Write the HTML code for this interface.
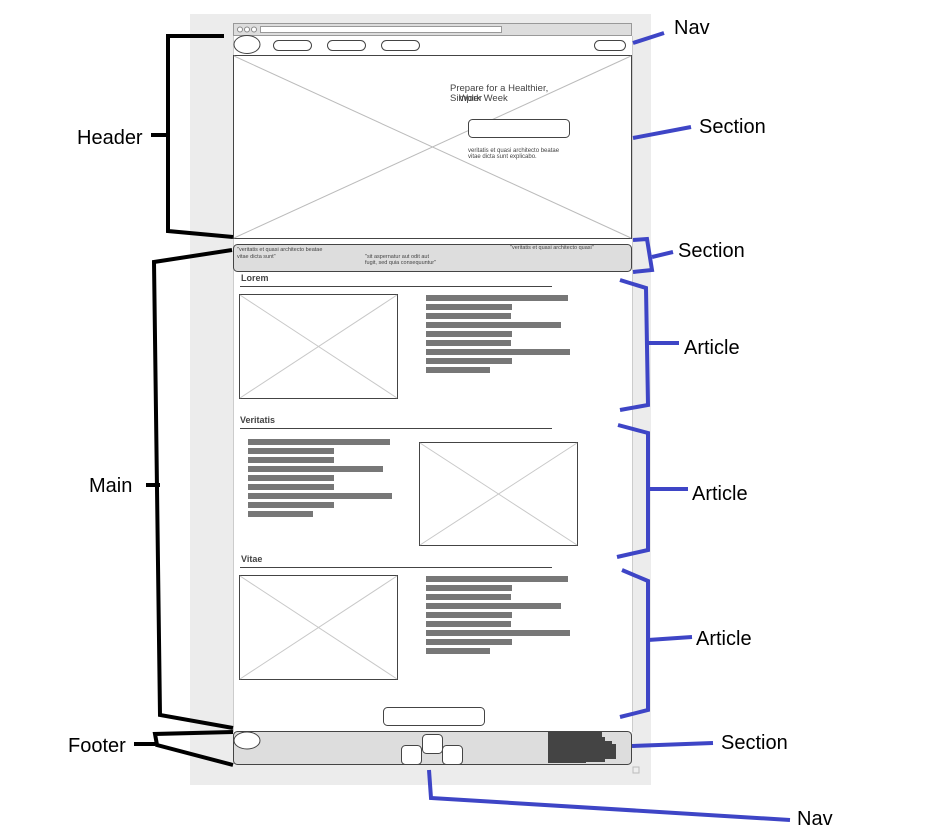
<!DOCTYPE html>
<html><head><meta charset="utf-8"><style>
html,body{margin:0;padding:0;background:#fff;width:937px;height:840px;overflow:hidden}
svg{display:block}
.lbl{font-family:"Liberation Sans",sans-serif;font-size:20px;fill:#000}
.s{font-family:"Liberation Sans",sans-serif;fill:#444}
</style></head><body>
<svg width="937" height="840" viewBox="0 0 937 840" xmlns="http://www.w3.org/2000/svg">
<rect x="190" y="14" width="461" height="771" fill="#ececec"/>
<rect x="233.5" y="23.5" width="398" height="12" fill="#ddd" stroke="#999"/>
<circle cx="240" cy="29.5" r="2.5" fill="#fff" stroke="#888"/><circle cx="247" cy="29.5" r="2.5" fill="#fff" stroke="#888"/><circle cx="254" cy="29.5" r="2.5" fill="#fff" stroke="#888"/>
<rect x="260.5" y="26.5" width="241" height="6" fill="#fff" stroke="#999"/>
<rect x="233" y="36" width="399" height="696" fill="#fff"/>
<line x1="632.5" y1="36" x2="632.5" y2="732" stroke="#ccc"/>
<line x1="233.5" y1="36" x2="233.5" y2="732" stroke="#ccc"/>
<ellipse cx="247" cy="44.5" rx="13" ry="9" fill="#fff" stroke="#444"/>
<rect x="273.5" y="40.5" width="38" height="10" rx="5" fill="#fff" stroke="#444"/>
<rect x="327.5" y="40.5" width="38" height="10" rx="5" fill="#fff" stroke="#444"/>
<rect x="381.5" y="40.5" width="38" height="10" rx="5" fill="#fff" stroke="#444"/>
<rect x="594.5" y="40.5" width="31" height="10" rx="5" fill="#fff" stroke="#444"/>
<rect x="233.5" y="55.5" width="398" height="183" fill="#fff" stroke="#444"/>
<line x1="234" y1="56" x2="631" y2="238" stroke="#bbb"/><line x1="631" y1="56" x2="234" y2="238" stroke="#bbb"/>
<text class="s" x="450" y="91" font-size="9.5">Prepare for a Healthier,</text>
<text class="s" x="450" y="101" font-size="9.5">Simpler</text>
<text class="s" x="459" y="101" font-size="9.5">Work Week</text>
<rect x="468.5" y="119.5" width="101" height="18" rx="4" fill="#fff" stroke="#444"/>
<text class="s" x="468" y="152" font-size="6">veritatis et quasi architecto beatae</text>
<text class="s" x="468" y="158" font-size="6">vitae dicta sunt explicabo.</text>
<rect x="233.5" y="244.5" width="398" height="27" rx="4" fill="#ddd" stroke="#444"/>
<text class="s" x="237" y="251" font-size="5.5">"veritatis et quasi architecto beatae</text>
<text class="s" x="237" y="258" font-size="5.5">vitae dicta sunt"</text>
<text class="s" x="365" y="258" font-size="5.5">"sit aspernatur aut odit aut</text>
<text class="s" x="365" y="264" font-size="5.5">fugit, sed quia consequuntur"</text>
<text class="s" x="510" y="249" font-size="5.5">"veritatis et quasi architecto quasi"</text>
<text class="s" x="241" y="281" font-size="9" font-weight="bold">Lorem</text>
<text class="s" x="240" y="423" font-size="9" font-weight="bold">Veritatis</text>
<text class="s" x="241" y="562" font-size="9" font-weight="bold">Vitae</text>
<g stroke="#444"><line x1="240" y1="286.5" x2="552" y2="286.5"/><line x1="240" y1="428.5" x2="552" y2="428.5"/><line x1="240" y1="567.5" x2="552" y2="567.5"/></g>
<g fill="#fff" stroke="#444">
<rect x="239.5" y="294.5" width="158" height="104"/>
<rect x="419.5" y="442.5" width="158" height="103"/>
<rect x="239.5" y="575.5" width="158" height="104"/>
</g>
<g stroke="#c8c8c8">
<line x1="240" y1="295" x2="397" y2="398"/><line x1="397" y1="295" x2="240" y2="398"/>
<line x1="420" y1="443" x2="577" y2="545"/><line x1="577" y1="443" x2="420" y2="545"/>
<line x1="240" y1="576" x2="397" y2="679"/><line x1="397" y1="576" x2="240" y2="679"/>
</g>
<g fill="#777">
<rect x="426" y="295" width="142" height="6"/><rect x="426" y="304" width="86" height="6"/><rect x="426" y="313" width="85" height="6"/><rect x="426" y="322" width="135" height="6"/><rect x="426" y="331" width="86" height="6"/><rect x="426" y="340" width="85" height="6"/><rect x="426" y="349" width="144" height="6"/><rect x="426" y="358" width="86" height="6"/><rect x="426" y="367" width="64" height="6"/>
<rect x="248" y="439" width="142" height="6"/><rect x="248" y="448" width="86" height="6"/><rect x="248" y="457" width="86" height="6"/><rect x="248" y="466" width="135" height="6"/><rect x="248" y="475" width="86" height="6"/><rect x="248" y="484" width="86" height="6"/><rect x="248" y="493" width="144" height="6"/><rect x="248" y="502" width="86" height="6"/><rect x="248" y="511" width="65" height="6"/>
<rect x="426" y="576" width="142" height="6"/><rect x="426" y="585" width="86" height="6"/><rect x="426" y="594" width="85" height="6"/><rect x="426" y="603" width="135" height="6"/><rect x="426" y="612" width="86" height="6"/><rect x="426" y="621" width="85" height="6"/><rect x="426" y="630" width="144" height="6"/><rect x="426" y="639" width="86" height="6"/><rect x="426" y="648" width="64" height="6"/>
</g>
<rect x="383.5" y="707.5" width="101" height="18" rx="4" fill="#fff" stroke="#444"/>
<rect x="233.5" y="731.5" width="398" height="33" rx="4" fill="#ddd" stroke="#444"/>
<ellipse cx="247" cy="740.5" rx="13" ry="8.5" fill="#fff" stroke="#444"/>
<rect x="401.5" y="745.5" width="20" height="19" rx="4" fill="#fff" stroke="#444"/>
<rect x="442.5" y="745.5" width="20" height="19" rx="4" fill="#fff" stroke="#444"/>
<rect x="422.5" y="734.5" width="20" height="19" rx="4" fill="#fff" stroke="#444"/>
<path d="M548 732H602V737H605V741H612V744H616V759H605V762H586V763H548Z" fill="#444"/>
<rect x="633" y="767" width="6" height="6" fill="#eee" stroke="#bbb"/>
<g stroke="#000" stroke-width="4" fill="none">
<polyline points="224,36 168,36 168,231 233,237"/>
<line x1="151" y1="135" x2="168" y2="135"/>
<polyline points="232,250 154,262 160,715 233,728"/>
<line x1="146" y1="485" x2="160" y2="485"/>
<polyline points="233,732 155,734 157,745 233,765"/>
<line x1="134" y1="744" x2="155" y2="744"/>
</g>
<text class="lbl" x="77" y="144">Header</text>
<text class="lbl" x="89" y="492">Main</text>
<text class="lbl" x="68" y="752">Footer</text>
<g stroke="#3e45c6" stroke-width="4" fill="none">
<line x1="633" y1="43" x2="664" y2="33"/>
<line x1="633" y1="138" x2="691" y2="127"/>
<polyline points="633,240 647,239 652,270 633,272"/>
<line x1="652" y1="257" x2="673" y2="252"/>
<polyline points="620,280 646,288 648,405 620,410"/>
<line x1="648" y1="343" x2="679" y2="343"/>
<polyline points="618,425 648,433 648,550 617,557"/>
<line x1="648" y1="489" x2="688" y2="489"/>
<polyline points="622,570 648,581 648,710 620,717"/>
<line x1="648" y1="640" x2="692" y2="637"/>
<line x1="632" y1="746" x2="713" y2="743"/>
<polyline points="429,770 431,798 790,820"/>
</g>
<text class="lbl" x="674" y="34">Nav</text>
<text class="lbl" x="699" y="133">Section</text>
<text class="lbl" x="678" y="257">Section</text>
<text class="lbl" x="684" y="354">Article</text>
<text class="lbl" x="692" y="500">Article</text>
<text class="lbl" x="696" y="645">Article</text>
<text class="lbl" x="721" y="749">Section</text>
<text class="lbl" x="797" y="825">Nav</text>
</svg>
</body></html>
